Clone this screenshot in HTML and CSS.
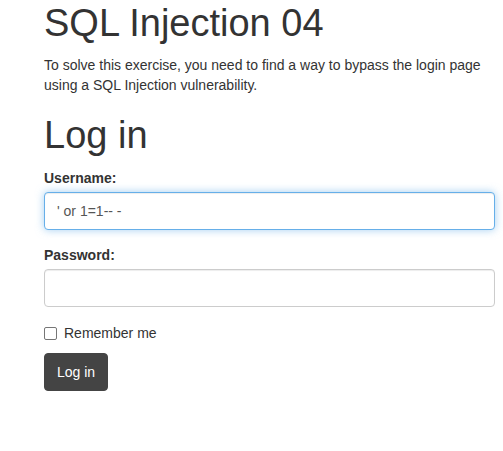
FILE: index.html
```html
<!DOCTYPE html>
<html>
<head>
<meta charset="utf-8">
<link rel="stylesheet" href="styles.css">
</head>
<body>
<div class="page">
  <h1 class="title">SQL Injection 04</h1>
  <p class="intro">To solve this exercise, you need to find a way to bypass the login page using a SQL Injection vulnerability.</p>
  <h2 class="login-title">Log in</h2>
  <form class="form">
    <div class="form-group">
      <label class="label" for="u">Username:</label>
      <input class="control focused" id="u" type="text" value="' or 1=1-- -">
    </div>
    <div class="form-group">
      <label class="label" for="p">Password:</label>
      <input class="control" id="p" type="password">
    </div>
    <div class="check">
      <span class="box"></span><span class="check-text">Remember me</span>
    </div>
    <button class="btn" type="button">Log in</button>
  </form>
</div>
</body>
</html>
```
FILE: styles.css
```css
* { box-sizing: border-box; }
html, body { margin: 0; padding: 0; background: #fff; }
body {
  font-family: "Liberation Sans", Arial, sans-serif;
  font-size: 14px;
  line-height: 20px;
  color: #333;
}
.page {
  width: 451px;
  margin-left: 44px;
}
.title {
  margin: 0 0 9px;
  font-size: 38px;
  font-weight: 500;
  line-height: 46px;
}
.intro {
  margin: 0 0 10px;
}
.login-title {
  margin: 20px 0 13px;
  font-size: 38px;
  font-weight: 500;
  line-height: 40px;
}
.form-group { margin-bottom: 15px; }
.label {
  display: inline-block;
  margin-bottom: 4px;
  font-weight: bold;
  vertical-align: top;
}
.control {
  display: block;
  width: 451px;
  height: 38px;
  padding: 6px 12px;
  font-family: "Liberation Sans", Arial, sans-serif;
  font-size: 14px;
  color: #555;
  background: #fff;
  border: 1px solid #ccc;
  border-radius: 4px;
  box-shadow: inset 0 1px 1px rgba(0,0,0,.075);
  outline: none;
}
.control.focused {
  border-color: #66afe9;
  box-shadow: inset 0 1px 1px rgba(0,0,0,.075), 0 0 8px rgba(102,175,233,.6);
}
.check {
  display: flex;
  align-items: center;
  height: 20px;
  margin-bottom: 11px;
  padding-top: 2px;
}
.box {
  width: 13px;
  height: 13px;
  border: 1px solid #767676;
  border-radius: 2px;
  margin-right: 7px;
  background: #fff;
}
.btn {
  display: block;
  height: 38px;
  padding: 0 12px;
  font-family: "Liberation Sans", Arial, sans-serif;
  font-size: 14px;
  color: #fff;
  background: #444;
  border: 1px solid #444;
  border-radius: 4px;
}
```
